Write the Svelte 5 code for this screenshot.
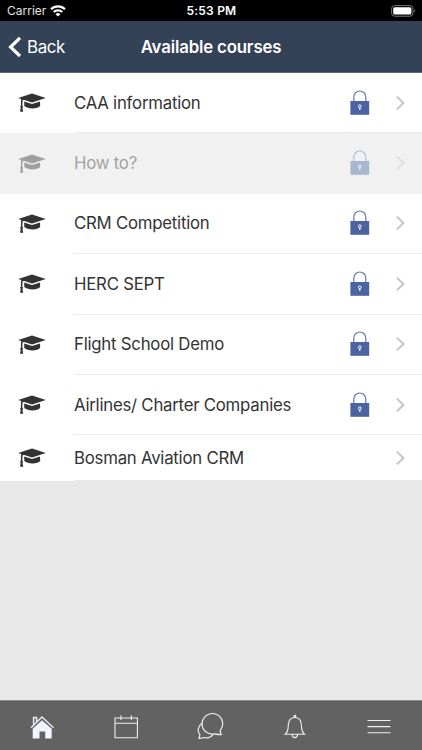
<script lang="ts">
  type Course = {
    name: string;
    locked: boolean;
    disabled?: boolean;
  };

  const courses: Course[] = [
    { name: 'CAA information', locked: true },
    { name: 'How to?', locked: true, disabled: true },
    { name: 'CRM Competition', locked: true },
    { name: 'HERC SEPT', locked: true },
    { name: 'Flight School Demo', locked: true },
    { name: 'Airlines/ Charter Companies', locked: true },
    { name: 'Bosman Aviation CRM', locked: false }
  ];
</script>

<div class="screen">
  <div class="status-bar">
    <div class="carrier">
      <span>Carrier</span>
      <svg width="16" height="12" viewBox="0 0 16 12" fill="none" stroke="#fff" stroke-width="2.1">
        <path d="M1 4.2a10 10 0 0 1 14 0M3.7 7.1a6.1 6.1 0 0 1 8.6 0" />
        <path d="M8 11.5 5.6 9.2a3.4 3.4 0 0 1 4.8 0Z" fill="#fff" stroke="none" />
      </svg>
    </div>
    <span class="time">5:53 PM</span>
    <svg class="battery" width="25" height="12" viewBox="0 0 25 12">
      <rect x="0.6" y="0.6" width="21.4" height="10.6" rx="3" fill="none" stroke="#777" />
      <rect x="2.2" y="2.2" width="18.2" height="7.4" rx="1.5" fill="#fff" />
      <path d="M23.3 4.2v3.4c1.3-.5 1.3-2.9 0-3.4Z" fill="#777" />
    </svg>
  </div>

  <header class="header">
    <button type="button" class="back">
      <svg width="14" height="22" viewBox="0 0 14 22" fill="none" stroke="#fff" stroke-width="3.2">
        <path d="M12 1.8 2.6 11l9.4 9.2" />
      </svg>
      <span>Back</span>
    </button>
    <h1>Available courses</h1>
  </header>

  <main class="list">
    {#each courses as course}
      <div class="row" class:disabled={course.disabled} class:short={!course.locked}>
        <svg class="cap" width="28" height="20" viewBox="0 0 28 20" fill="#333">
          <path d="M.2 5 14 .4 27.8 5 14 9.4Z" />
          <path d="M6.2 8.5 14 11l8-2.6.2 4.4c-2.3 3.6-12.2 3.7-15.9.3Z" />
          <path d="M3 6.2 13.2 4.5v.7L4.6 7.2l-.3 5.2.8 1.3-.6 1 .7 4.1H2.1l.6-4.1-.6-1 .8-1.3Z" />
        </svg>
        <div class="content">
          <span class="name">{course.name}</span>
          {#if course.locked}
            <svg class="lock" width="20" height="26" viewBox="0 0 20 26">
              <path d="M3.8 11V7a6 6 0 0 1 12 0v4" fill="none" stroke="#6678ab" stroke-width="1.2" />
              <rect x=".4" y="11" width="18.8" height="13.8" fill="#4b64a1" />
              <circle cx="9.8" cy="16.3" r="1.4" fill="none" stroke="#fff" stroke-width="1" />
              <path d="M9.8 17.5v2.6" stroke="#fff" stroke-width="1.2" />
            </svg>
          {/if}
          <svg class="chevron" width="10" height="16" viewBox="0 0 10 16" fill="none" stroke="#c5c5c7" stroke-width="2">
            <path d="M.9 1.6 7.4 8 .9 14.4" />
          </svg>
        </div>
      </div>
    {/each}
  </main>

  <nav class="tab-bar">
    <button type="button" aria-label="Home">
      <svg width="26" height="26" viewBox="0 0 26 26" fill="#f2f4ff">
        <path d="M3.7 15.8 13 7.3l9.7 8.5v9.7h-6.5v-7.1h-5.7v7.1H3.7Z" />
        <path d="M4.6 12V4.5h3V9M2 14.7 13 4l11.5 10.7" fill="none" stroke="#e9eaf2" stroke-width="1.5" />
      </svg>
    </button>
    <button type="button" aria-label="Calendar">
      <svg width="26" height="26" viewBox="0 0 26 26" fill="none" stroke="#f0f0f0" stroke-width="1.1">
        <path d="M2 5h22.4v19.7H2ZM2 10.2h22.4M8 2.3v4.8M18.3 2.3v4.8" />
      </svg>
    </button>
    <button type="button" aria-label="Messages">
      <svg width="28" height="28" viewBox="0 0 28 28" fill="none" stroke="#f0f0f0" stroke-width="1.2" stroke-linejoin="round">
        <path d="M24.3 18.4A10.3 10.3 0 1 0 19 21.8c2.2.6 4.4.9 6.3.8-.8-1.2-1.1-2.7-1-4.2Z" />
        <path d="M6.2 11.1C1.7 14.4 1 19.5 3.8 22.5c.1 1.4-.2 2.7-.9 3.9 1.9 0 3.5-.3 5-.9 3.4 1 7-.2 9.2-3.1" />
      </svg>
    </button>
    <button type="button" aria-label="Notifications">
      <svg width="24" height="26" viewBox="0 0 24 26" fill="none" stroke="#f0f0f0" stroke-width="1.1">
        <path d="M2.2 21.2h19.3c-1.8-1.3-2.7-3.1-2.9-6.1-.2-5.3-.6-10.6-6.7-10.6s-6.6 5.3-6.8 10.6c-.2 3-1.1 4.8-2.9 6.1ZM9.2 21.5c.1 4.2 5.2 4.2 5.3 0" />
        <circle cx="11.9" cy="3.2" r=".9" />
      </svg>
    </button>
    <button type="button" aria-label="Menu">
      <svg width="26" height="26" viewBox="0 0 26 26" fill="none" stroke="#f0f0f0" stroke-width="1.1">
        <path d="M1.5 7.5h23M1.5 13.6h23M1.5 19.7h23" />
      </svg>
    </button>
  </nav>
</div>

<style>
  :global(body) {
    margin: 0;
  }

  .screen {
    width: 422px;
    height: 750px;
    display: flex;
    flex-direction: column;
    overflow: hidden;
    background: #e8e8e8;
    font-family: Inter, Roboto, sans-serif;
    color: #333;
  }

  button {
    margin: 0;
    padding: 0;
    border: none;
    background: none;
    font: inherit;
    color: inherit;
  }

  svg {
    display: block;
    flex: none;
  }

  .status-bar {
    height: 21px;
    flex: none;
    display: grid;
    grid-template-columns: 1fr auto 1fr;
    align-items: center;
    padding: 0 6px 0 7px;
    background: #000;
    color: #fff;
    font-size: 12px;
  }

  .carrier {
    display: flex;
    align-items: center;
    gap: 4px;
    color: #e4e4e4;
  }

  .time {
    font-weight: 600;
    letter-spacing: 0.2px;
  }

  .battery {
    justify-self: end;
  }

  .header {
    height: 52px;
    flex: none;
    box-sizing: border-box;
    display: grid;
    grid-template-columns: 1fr auto 1fr;
    align-items: center;
    padding: 0 8px;
    border-bottom: 1px solid #5c6877;
    background: #344258;
    color: #fff;
  }

  .back {
    display: flex;
    align-items: center;
    gap: 5px;
    font-size: 16.9px;
    letter-spacing: -0.4px;
  }

  h1 {
    margin: 0;
    font-size: 16.8px;
    font-weight: 600;
    letter-spacing: -0.15px;
  }

  .row {
    height: 60.4px;
    display: flex;
    background: #fff;
  }

  .row.short {
    height: 45.4px;
  }

  .row.disabled {
    background: #f1f1f1;
  }

  .row.disabled .cap,
  .row.disabled .name,
  .row.disabled .lock,
  .row.disabled .chevron {
    opacity: 0.42;
  }

  .cap {
    align-self: center;
    margin: 0 28px 0 18px;
  }

  .content {
    flex: 1;
    display: flex;
    align-items: center;
    box-sizing: border-box;
    padding-right: 16px;
    border-bottom: 1px solid #e9e9ea;
  }

  .row.disabled .content {
    border-bottom-color: #f1f1f1;
  }

  .name {
    flex: 1;
    font-size: 16.8px;
    letter-spacing: -0.24px;
    white-space: nowrap;
  }

  .lock {
    margin-right: 26px;
  }

  .tab-bar {
    height: 50px;
    flex: none;
    box-sizing: border-box;
    display: grid;
    grid-template-columns: repeat(5, 1fr);
    margin-top: auto;
    padding-right: 1px;
    border-top: 1px solid #898b88;
    background: #626262;
  }

  .tab-bar button {
    display: flex;
    align-items: center;
    justify-content: center;
  }
</style>
